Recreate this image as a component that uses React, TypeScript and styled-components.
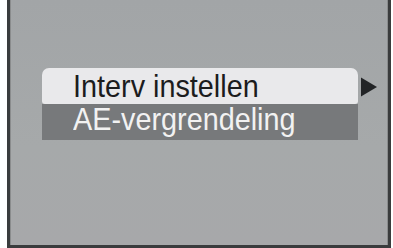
import React from 'react';
import styled, { createGlobalStyle } from 'styled-components';

const GlobalStyle = createGlobalStyle`
  html, body {
    margin: 0;
    padding: 0;
    background: #ffffff;
  }
  body {
    font-family: 'Liberation Sans', Arial, sans-serif;
  }
`;

const Page = styled.div`
  width: 393px;
  height: 248px;
  padding: 0 2px 0 7px;
  box-sizing: border-box;
  background: #ffffff;
`;

const Screen = styled.div`
  height: 100%;
  box-sizing: border-box;
  border: 3px solid #3a3c3d;
  border-top: none;
  box-shadow: inset 1px 0 0 #8a8c8d, inset -1px 0 0 #8a8c8d;
  background: linear-gradient(180deg, #a2a5a7 0%, #a6a9aa 60%, #a7a8aa 100%);
  padding: 68px 0 0 32px;
`;

const Menu = styled.div`
  display: flex;
  align-items: flex-start;
  gap: 2px;
`;

const List = styled.div`
  width: 316px;
  display: flex;
  flex-direction: column;
`;

const Item = styled.div<{ $selected?: boolean }>`
  height: 36px;
  box-sizing: border-box;
  padding-left: 31px;
  font-size: 32px;
  white-space: nowrap;
  line-height: ${p => (p.$selected ? '36px' : '31px')};
  padding-bottom: ${p => (p.$selected ? '0' : '5px')};
  color: ${p => (p.$selected ? '#1b1c1d' : '#f2f2f2')};
  background: ${p => (p.$selected ? '#e9e9eb' : '#77797b')};
  border-radius: ${p => (p.$selected ? '7px 7px 3px 3px' : '0')};
`;

const Label = styled.span`
  display: inline-block;
  transform: scaleX(0.9);
  transform-origin: left center;
`;

const Arrow = styled.svg`
  width: 18px;
  height: 22px;
  margin-top: 8px;
  flex-shrink: 0;
`;

export default function App() {
  return (
    <>
      <GlobalStyle />
      <Page>
        <Screen>
          <Menu>
            <List>
              <Item $selected>
                <Label>Interv instellen</Label>
              </Item>
              <Item>
                <Label>AE-vergrendeling</Label>
              </Item>
            </List>
            <Arrow viewBox="0 0 18 22">
              <path d="M1 1.5 L17 11 L1 20.5 Z" fill="#222426" />
            </Arrow>
          </Menu>
        </Screen>
      </Page>
    </>
  );
}
